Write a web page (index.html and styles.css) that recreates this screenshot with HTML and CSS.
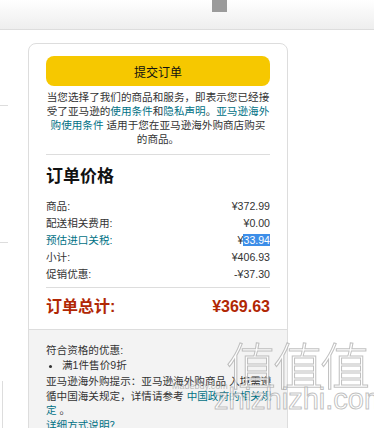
FILE: index.html
```html
<!DOCTYPE html>
<html lang="zh-CN">
<head>
    <meta charset="UTF-8">
    <meta name="viewport" content="width=device-width, initial-scale=1.0">
    <title>提交订单</title>
    <link rel="stylesheet" href="styles.css">
</head>
<body>
    <div class="topbar"><span class="tab"></span></div>

    <div class="page">
        <div class="side">
            <div class="side-rule first"></div>
            <div class="side-rule second"></div>
            <div class="side-box"></div>
            <div class="side-line"></div>
        </div>

        <div class="summary">
            <div class="summary-main">
                <button class="place-order">提交订单</button>
                <p class="legal">当您选择了我们的商品和服务，即表示您已经接受了亚马逊的<a href="#">使用条件</a>和<a href="#">隐私声明</a>。<a href="#">亚马逊海外购使用条件</a> 适用于您在亚马逊海外购商店购买的商品。</p>
                <div class="rule"></div>

                <h3 class="title">订单价格</h3>
                <div class="rows">
                    <div class="row"><span>商品:</span><span>¥372.99</span></div>
                    <div class="row"><span>配送相关费用:</span><span>¥0.00</span></div>
                    <div class="row"><a href="#">预估进口关税:</a><span>¥<span class="picked">33.94</span></span></div>
                    <div class="row"><span>小计:</span><span>¥406.93</span></div>
                    <div class="row"><span>促销优惠:</span><span>-¥37.30</span></div>
                </div>
                <div class="rule low"></div>

                <div class="total"><span>订单总计:</span><span>¥369.63</span></div>
            </div>

            <div class="summary-extra">
                <p>符合资格的优惠:</p>
                <ul class="promo">
                    <li>满1件售价9折</li>
                </ul>
                <p class="tip">亚马逊海外购提示：亚马逊海外购商品 入境需遵循中国海关规定，详情请参考 <a href="#">中国政府的相关规定</a> 。</p>
                <p><a href="#">详细方式说明？</a></p>
            </div>
        </div>
    </div>

    <!-- watermark on top of the screenshot -->
    <div class="watermark">
        <div class="wm-big">值值值</div>
        <div class="wm-small">Madebuy.com</div>
        <div class="wm-url">zhizhizhi.com</div>
    </div>
</body>
</html>
```

FILE: styles.css
```css
body {
    margin: 0;
    padding: 0;
    background: #fff;
    color: #111;
    font-family: "Liberation Sans", "Noto Sans CJK SC", sans-serif;
    font-size: 10.6px;
    overflow: hidden;
}
a {
    color: #007185;
    text-decoration: none;
}

.topbar {
    height: 29px;
    border-bottom: 1px solid #ddd;
    background: linear-gradient(#fff, #eee);
    padding-left: 212px;
}
.topbar .tab {
    display: block;
    width: 15px;
    height: 12px;
    background: #9b9b9b;
}

.page {
    display: flex;
    align-items: flex-start;
}

/* bits of the left column that are cut off */
.side {
    width: 28px;
    flex: none;
}
.side-rule {
    width: 8px;
    height: 1px;
    background: #ddd;
}
.side-rule.first { margin-top: 75px; }
.side-rule.second { margin-top: 136px; }
.side-box {
    margin: 47px 0 0 -12px;
    width: 12px;
    height: 78px;
    border: 1px solid #36a3a8;
    border-radius: 4px;
    box-sizing: border-box;
}
.side-line {
    margin: 13px 0 0 2px;
    width: 1px;
    height: 60px;
    background: #ddd;
}

.summary {
    width: 260px;
    margin-top: 13px;
    border: 1px solid #ddd;
    border-radius: 8px;
    box-sizing: border-box;
    overflow: hidden;
}
.summary-main {
    padding: 12px 17px 12px;
}
.place-order {
    display: block;
    width: 100%;
    height: 30px;
    border: none;
    border-radius: 8px;
    background: #f6c800;
    color: #0f1111;
    font-family: "Liberation Sans", "Noto Sans CJK SC", sans-serif;
    font-size: 12px;
}
.legal {
    margin: 4px 0 0;
    line-height: 14px;
    text-align: center;
    color: #333;
}
.rule {
    margin-top: 8px;
    height: 1px;
    background: #ddd;
}
.rule.low { margin-top: 4px; }

.title {
    margin: 12px 0 0;
    font-size: 17px;
    line-height: 20px;
    font-weight: bold;
    color: #111;
}
.rows {
    margin-top: 11px;
}
.row {
    display: flex;
    justify-content: space-between;
    line-height: 17px;
    color: #333;
}
.picked {
    background: #3d8ee8;
    color: #fff;
}
.total {
    display: flex;
    justify-content: space-between;
    margin-top: 9px;
    line-height: 20px;
    font-size: 16px;
    font-weight: bold;
    color: #b12704;
}

.summary-extra {
    border-top: 1px solid #ddd;
    background: #f3f3f3;
    padding: 13px 12px 20px 17px;
    color: #333;
    line-height: 14.5px;
    height: 120px;
}
.summary-extra p {
    margin: 0;
}
.promo {
    margin: 0;
    padding-left: 16px;
}
.tip {
    margin-top: 2px !important;
}

.watermark {
    position: absolute;
    left: 212px;
    top: 333px;
    width: 170px;
    pointer-events: none;
    font-family: "Noto Sans CJK SC", sans-serif;
}
.wm-big {
    margin-left: 14px;
    font-size: 50px;
    line-height: 60px;
    letter-spacing: -3px;
    font-weight: 300;
    color: rgba(255, 255, 255, 0.8);
    -webkit-text-stroke: 1px rgba(150, 150, 150, 0.6);
}
.wm-small {
    margin: -12px 0 0 -40px;
    font-family: "Liberation Sans", sans-serif;
    font-size: 9px;
    color: rgba(160, 160, 160, 0.7);
}
.wm-url {
    margin: -8px 0 0 2px;
    font-family: "Liberation Sans", sans-serif;
    font-size: 29px;
    line-height: 32px;
    color: rgba(255, 255, 255, 0.85);
    -webkit-text-stroke: 1px rgba(150, 150, 150, 0.6);
}
```
